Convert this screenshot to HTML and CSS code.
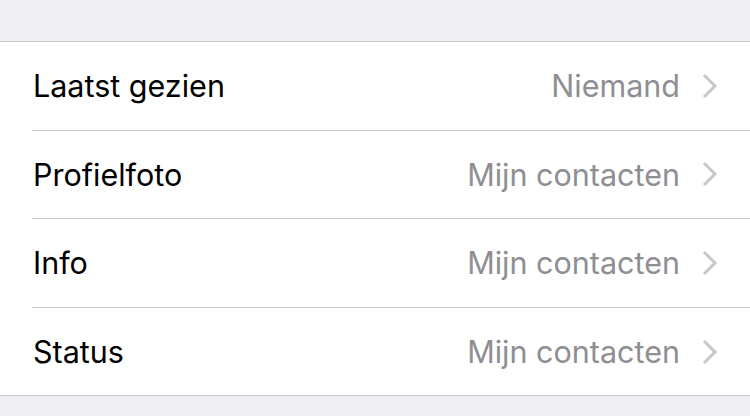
FILE: index.html
```html
<!DOCTYPE html>
<html lang="nl">
<head>
    <meta charset="UTF-8">
    <meta name="viewport" content="width=device-width, initial-scale=1.0">
    <title>Privacy</title>
    <link rel="stylesheet" href="styles.css">
</head>
<body>

<div class="group">
    <div class="row">
        <span class="label">Laatst gezien</span>
        <span class="value">Niemand</span>
        <svg class="chevron" viewBox="0 0 16 26"><path d="M2 2 L13 13 L2 24"/></svg>
    </div>
    <div class="row">
        <span class="label">Profielfoto</span>
        <span class="value">Mijn contacten</span>
        <svg class="chevron" viewBox="0 0 16 26"><path d="M2 2 L13 13 L2 24"/></svg>
    </div>
    <div class="row">
        <span class="label">Info</span>
        <span class="value">Mijn contacten</span>
        <svg class="chevron" viewBox="0 0 16 26"><path d="M2 2 L13 13 L2 24"/></svg>
    </div>
    <div class="row">
        <span class="label">Status</span>
        <span class="value">Mijn contacten</span>
        <svg class="chevron" viewBox="0 0 16 26"><path d="M2 2 L13 13 L2 24"/></svg>
    </div>
</div>

</body>
</html>
```
FILE: styles.css
```css
body {
    margin: 0;
    padding: 41px 0 20px;
    background-color: #efeff4;
    font-family: Inter, "Noto Sans", sans-serif;
}
.group {
    background: white;
    border-top: 1px solid #c8c7cc;
    border-bottom: 1px solid #c8c7cc;
    padding-left: 32px;
}
.row {
    display: flex;
    align-items: center;
    height: 87.6px;
    padding-right: 32px;
    border-bottom: 1px solid #c8c7cc;
}
.row:last-child {
    border-bottom: none;
}
.label {
    flex: 1;
    font-size: 30.5px;
    color: #000;
    padding-left: 1px;
}
.value {
    font-size: 30.5px;
    color: #8e8e93;
    margin-right: 22px;
}
.chevron {
    width: 16px;
    height: 26px;
    fill: none;
    stroke: #c7c7cc;
    stroke-width: 3;
}
```
